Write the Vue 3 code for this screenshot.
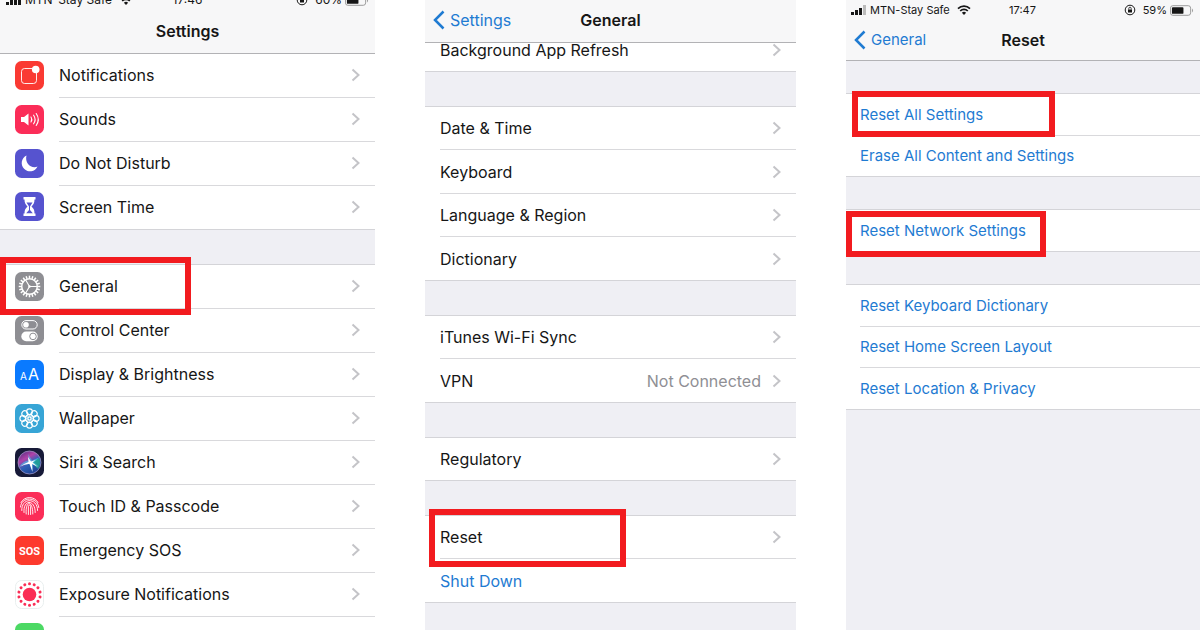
<script setup>
const settingsGroups = [
  [
    { label: 'Notifications', icon: 'notifications', color: '#fa3a33' },
    { label: 'Sounds', icon: 'sounds', color: '#fb2d58' },
    { label: 'Do Not Disturb', icon: 'moon', color: '#5653cf' },
    { label: 'Screen Time', icon: 'hourglass', color: '#5653cf' },
  ],
  [
    { label: 'General', icon: 'gear', color: '#8e8e93', marked: 'general' },
    { label: 'Control Center', icon: 'toggles', color: '#8e8e93' },
    { label: 'Display & Brightness', icon: 'display', color: '#0a7aff' },
    { label: 'Wallpaper', icon: 'flower', color: '#37a5d6' },
    { label: 'Siri & Search', icon: 'siri', color: '#171a38' },
    { label: 'Touch ID & Passcode', icon: 'touch', color: '#fb2d58' },
    { label: 'Emergency SOS', icon: 'sos', color: '#fd3a2d' },
    { label: 'Exposure Notifications', icon: 'exposure', color: '#ffffff' },
    { label: '', icon: 'battery', color: '#4cd964' },
  ],
]

const generalGroups = [
  [{ label: 'Background App Refresh' }],
  [
    { label: 'Date & Time' },
    { label: 'Keyboard' },
    { label: 'Language & Region' },
    { label: 'Dictionary' },
  ],
  [{ label: 'iTunes Wi-Fi Sync' }, { label: 'VPN', value: 'Not Connected' }],
  [{ label: 'Regulatory' }],
  [{ label: 'Reset', marked: 'reset' }, { label: 'Shut Down', action: true }],
]

const resetGroups = [
  [{ label: 'Reset All Settings', marked: 'all' }, { label: 'Erase All Content and Settings' }],
  [{ label: 'Reset Network Settings', marked: 'network' }],
  [
    { label: 'Reset Keyboard Dictionary' },
    { label: 'Reset Home Screen Layout' },
    { label: 'Reset Location & Privacy' },
  ],
]

const spin = (count) => Array.from({ length: count }, (_, i) => (i * 360) / count)
</script>

<template>
  <main class="board">
    <section class="phone settings">
      <div class="status">
        <div class="carrier">
          <svg class="signal" viewBox="0 0 16 10"><path d="M0 7h3v3H0zM4 5h3v5H4zM8 3h3v7H8zM12 0h3v10h-3z" /></svg>
          <span>MTN-Stay Safe</span>
          <svg class="wifi" viewBox="0 0 14 10"><path d="M1 3.6a8.6 8.6 0 0 1 12 0M3.2 6a5.4 5.4 0 0 1 7.6 0" fill="none" stroke="currentColor" stroke-width="1.7" /><path d="M4.9 7.7a3 3 0 0 1 4.2 0L7 10z" /></svg>
        </div>
        <time>17:46</time>
        <div class="power">
          <svg class="lock" viewBox="0 0 12 12"><circle cx="6" cy="6" r="4.8" fill="none" stroke="currentColor" /><path d="M4 5.5h4v3H4z" /><path d="M4.8 5.5V4.4a1.2 1.2 0 0 1 2.4 0v1.1" fill="none" stroke="currentColor" stroke-width=".8" /></svg>
          <span>60%</span>
          <svg class="cell" viewBox="0 0 25 11"><rect x=".5" y=".5" width="21" height="10" rx="2.5" fill="none" stroke="#999" /><rect x="2" y="2" width="12" height="7" rx="1" /><path d="M23 3.5q2 2 0 4z" fill="#999" /></svg>
        </div>
      </div>
      <header class="nav"><h1>Settings</h1></header>
      <ul v-for="(group, g) in settingsGroups" :key="g" class="group">
        <li v-for="item in group" :key="item.icon">
          <a href="#" class="row">
            <svg class="icon" viewBox="0 0 29 29" aria-hidden="true">
              <rect width="29" height="29" rx="6.5" :fill="item.color" />
              <g v-if="item.icon === 'notifications'">
                <path d="M17 7.5H9.5a3 3 0 0 0-3 3v9a3 3 0 0 0 3 3h9a3 3 0 0 0 3-3V12" fill="none" stroke="#fff" stroke-width=".9" />
                <circle cx="20.7" cy="8.5" r="3.8" fill="#fff" />
              </g>
              <g v-else-if="item.icon === 'sounds'" fill="none" stroke="#fff" stroke-width="1.1" stroke-linecap="round">
                <path d="M6 12h3l4.5-3.500v12L9 17H6z" fill="#fff" stroke="none" />
                <path d="M16 12a4.5 4.5 0 0 1 0 5M18.600 10.200a7.500 7.500 0 0 1 0 8.600M21.200 8.500a10.500 10.500 0 0 1 0 12" />
              </g>
              <path v-else-if="item.icon === 'moon'" d="M11.500 6.500A8.300 8.300 0 1 0 22.500 17.600C16 20 9.500 14 11.500 6.500z" fill="#fff" />
              <g v-else-if="item.icon === 'hourglass'">
                <path d="M8.500 5h12v2.600h-1c0 3.500-1 5-3 6.900 2 1.900 3 3.400 3 6.900h1V24h-12v-2.600h1c0-3.500 1-5 3-6.900-2-1.900-3-3.400-3-6.900h-1z" fill="#fff" />
                <path d="M11.500 10.500h6l-2.500 4v3.500l2.800 3.200h-6.600L14 18v-3.500z" fill="#5653cf" />
              </g>
              <g v-else-if="item.icon === 'gear'" fill="none" stroke="#fff">
                <circle cx="14.5" cy="14.5" r="7.800" stroke-width="1.500" />
                <path v-for="a in spin(20)" :key="a" d="M14.500 6.500V3.700" stroke-width="1.500" :transform="`rotate(${a} 14.5 14.5)`" />
                <path d="M14.500 14.500h7.500M14.500 14.500l-3.800-6.600M14.500 14.500l-3.800 6.600" stroke-width="1.100" />
                <circle cx="14.5" cy="14.5" r="1.200" fill="#fff" stroke="none" />
              </g>
              <g v-else-if="item.icon === 'toggles'">
                <rect x="6.800" y="4.600" width="15.400" height="8.400" rx="4.200" fill="none" stroke="#fff" />
                <circle cx="11" cy="8.800" r="2.800" fill="#fff" />
                <rect x="6.300" y="15.600" width="16.400" height="9.600" rx="4.800" fill="#fff" />
                <circle cx="18" cy="20.400" r="3.300" fill="none" stroke="#8e8e93" stroke-width="1" />
              </g>
              <g v-else-if="item.icon === 'display'" fill="#fff" class="glyphs">
                <text x="5" y="20" font-size="10">A</text>
                <text x="13" y="20" font-size="16">A</text>
              </g>
              <g v-else-if="item.icon === 'flower'" fill="none" stroke="#fff">
                <circle v-for="a in spin(8)" :key="a" cx="14.5" cy="7.800" r="2.900" stroke-width="1.100" :transform="`rotate(${a} 14.5 14.5)`" />
                <circle v-for="a in spin(8)" :key="'p' + a" cx="14.5" cy="11.600" r="1.700" stroke-width=".7" :transform="`rotate(${a + 22.5} 14.5 14.5)`" />
              </g>
              <g v-else-if="item.icon === 'siri'">
                <defs>
                  <linearGradient id="siri-glow" x1=".2" y1="0" x2=".8" y2="1">
                    <stop offset="0" stop-color="#5a2f86" /><stop offset=".3" stop-color="#b143a8" />
                    <stop offset=".55" stop-color="#2e62b8" /><stop offset="1" stop-color="#1d3c8c" />
                  </linearGradient>
                </defs>
                <circle cx="14.5" cy="14.5" r="11.500" fill="url(#siri-glow)" stroke="#a79ccc" stroke-width=".7" />
                <path d="M16 14l8-4q2.500 6-1 11z" fill="#1fae93" opacity=".8" />
                <path d="M4 19q5-7 10-6.500L13 6l4 6.500 7-3-5 5 5 4-6-2.500-.5 7-2.500-7q-5-.5-11 3z" fill="#55c4ee" opacity=".6" />
                <path d="M5 18.700q5-3.700 8.500-4.700L13 9l3 4.500 4.500-1.500-3 2.500 5.500 4.500-6-3 .500 8-3-8q-4-.5-9.500 2.700z" fill="#fff" />
              </g>
              <g v-else-if="item.icon === 'touch'" fill="none" stroke="#fff" stroke-width=".9" stroke-linecap="round">
                <path d="M6 10.500C9.500 3.800 19.500 3.800 23 10.500M5.500 15C6 4.500 22.500 4 23.800 15.500M6.800 18.500c-.8-13 15.800-13.500 15.800 0M9 20.500c-1.200-13.500 11.400-13.500 11.200 0M11.200 22c-1.200-14 6.800-14 6.600 0M13.400 22.500v-8c0-1.800 2.200-1.800 2.200 0v8" />
              </g>
              <text v-else-if="item.icon === 'sos'" class="sos" x="14.5" y="18.500" text-anchor="middle" font-size="11" fill="#fff">SOS</text>
              <g v-else-if="item.icon === 'exposure'" fill="#fa2d55">
                <rect x=".5" y=".5" width="28" height="28" rx="6" fill="none" stroke="#e9eeee" />
                <circle cx="14.5" cy="14.5" r="6.800" />
                <circle v-for="a in spin(14)" :key="a" cx="14.5" cy="3.700" r="1.500" :transform="`rotate(${a} 14.5 14.5)`" />
              </g>
            </svg>
            <span class="body">
              <span class="label">{{ item.label }}</span>
              <svg class="chevron" viewBox="0 0 9 14"><path d="M1.500 1.500 7.500 7l-6 5.500" /></svg>
            </span>
          </a>
          <i v-if="item.marked" class="mark" :class="item.marked"></i>
        </li>
      </ul>
    </section>

    <section class="phone general">
      <header class="nav">
        <a href="#" class="back"><svg viewBox="0 0 12 20"><path d="M10.500 1.500 2 10l8.500 8.500" /></svg>Settings</a>
        <h1>General</h1>
      </header>
      <ul v-for="(group, g) in generalGroups" :key="g" class="group">
        <li v-for="item in group" :key="item.label">
          <button v-if="item.action" type="button" class="row action">
            <span class="body"><span class="label">{{ item.label }}</span></span>
          </button>
          <a v-else href="#" class="row">
            <span class="body">
              <span class="label">{{ item.label }}</span>
              <span v-if="item.value" class="value">{{ item.value }}</span>
              <svg class="chevron" viewBox="0 0 9 14"><path d="M1.500 1.500 7.500 7l-6 5.500" /></svg>
            </span>
          </a>
          <i v-if="item.marked" class="mark" :class="item.marked"></i>
        </li>
      </ul>
    </section>

    <section class="phone reset-page">
      <div class="status">
        <div class="carrier">
          <svg class="signal" viewBox="0 0 16 10"><path d="M0 7h3v3H0zM4 5h3v5H4zM8 3h3v7H8z" /><path d="M12 0h3v10h-3z" fill="#bbb" /></svg>
          <span>MTN-Stay Safe</span>
          <svg class="wifi" viewBox="0 0 14 10"><path d="M1 3.600a8.600 8.600 0 0 1 12 0M3.200 6a5.400 5.400 0 0 1 7.600 0" fill="none" stroke="currentColor" stroke-width="1.700" /><path d="M4.900 7.700a3 3 0 0 1 4.200 0L7 10z" /></svg>
        </div>
        <time>17:47</time>
        <div class="power">
          <svg class="lock" viewBox="0 0 12 12"><circle cx="6" cy="6" r="4.800" fill="none" stroke="currentColor" /><path d="M4 5.500h4v3H4z" /><path d="M4.800 5.500V4.400a1.200 1.200 0 0 1 2.400 0v1.100" fill="none" stroke="currentColor" stroke-width=".8" /></svg>
          <span>59%</span>
          <svg class="cell" viewBox="0 0 25 11"><rect x=".5" y=".5" width="21" height="10" rx="2.500" fill="none" stroke="#999" /><rect x="2" y="2" width="12" height="7" rx="1" /><path d="M23 3.500q2 2 0 4z" fill="#999" /></svg>
        </div>
      </div>
      <header class="nav">
        <a href="#" class="back"><svg viewBox="0 0 12 20"><path d="M10.500 1.500 2 10l8.500 8.500" /></svg>General</a>
        <h1>Reset</h1>
      </header>
      <ul v-for="(group, g) in resetGroups" :key="g" class="group">
        <li v-for="item in group" :key="item.label">
          <button type="button" class="row action">
            <span class="body"><span class="label">{{ item.label }}</span></span>
          </button>
          <i v-if="item.marked" class="mark" :class="item.marked"></i>
        </li>
      </ul>
    </section>
  </main>
</template>

<style>
body {
  background: #fff;
}
</style>

<style scoped>
.board {
  display: grid;
  grid-template-columns: 375fr 371fr 354fr;
  column-gap: 50px;
  height: 100vh;
  overflow: hidden;
  font-family: Inter, "Liberation Sans", sans-serif;
  font-size: 16px;
  color: #161616;
}
.phone {
  min-width: 0;
  height: 100vh;
  background: #efeff4;
}
.status {
  display: grid;
  grid-template-columns: 1fr auto 1fr;
  align-items: center;
  height: 20px;
  padding: 0 6px;
  background: #f7f7f8;
  font-size: 12px;
  line-height: 20px;
}
.settings .status {
  margin-top: -10px;
}
.status svg {
  fill: currentColor;
}
.carrier,
.power {
  display: flex;
  align-items: center;
  gap: 3px;
}
.power {
  justify-content: flex-end;
}
.signal {
  width: 16px;
  height: 10px;
}
.wifi {
  width: 14px;
  height: 10px;
  margin-left: 4px;
}
.lock {
  width: 12px;
  height: 12px;
  margin-right: 4px;
}
.cell {
  width: 24px;
  height: 11px;
}
.nav {
  position: relative;
  display: grid;
  grid-template-columns: 1fr auto 1fr;
  align-items: center;
  box-sizing: border-box;
  height: 44px;
  border-bottom: 1px solid #b2b2b5;
  background: #f7f7f8;
  z-index: 1;
}
h1 {
  grid-column: 2;
  margin: 0;
  font-size: 16px;
  line-height: 20px;
  font-weight: 600;
}
.back {
  display: flex;
  align-items: center;
  gap: 5px;
  padding-left: 8px;
  color: #1f7bd2;
  text-decoration: none;
  line-height: 20px;
}
.back svg {
  width: 12px;
  height: 20px;
  fill: none;
  stroke: currentColor;
  stroke-width: 2.5;
}
.group {
  margin: 0;
  padding: 0;
  list-style: none;
  border-top: 1px solid #d4d4d8;
  background: #fff;
}
.group + .group {
  margin-top: 34px;
}
li {
  position: relative;
  height: 44px;
}
.row {
  display: flex;
  align-items: center;
  gap: 15px;
  box-sizing: border-box;
  width: 100%;
  height: 100%;
  margin: 0;
  padding: 0 0 0 15px;
  border: 0;
  background: none;
  color: inherit;
  font: inherit;
  text-align: left;
  text-decoration: none;
  cursor: pointer;
}
.icon {
  flex: none;
  width: 29px;
  height: 29px;
  margin-bottom: 2px;
}
.body {
  flex: 1;
  display: flex;
  align-items: center;
  gap: 11px;
  align-self: stretch;
  padding-right: 15px;
  border-bottom: 1px solid #d9d9dc;
}
li:last-child .row {
  border-bottom: 1px solid #d4d4d8;
}
li:last-child .body {
  border-bottom: 0;
}
.label {
  flex: 1;
  line-height: 20px;
  white-space: nowrap;
}
.value {
  color: #8f8f94;
}
.chevron {
  width: 9px;
  height: 14px;
  fill: none;
  stroke: #c4c4c8;
  stroke-width: 2;
}
.action {
  color: #1f7bd2;
}
.settings .nav + .group {
  border-top: 0;
}
.settings .nav,
.general .nav,
.settings .body {
  padding-bottom: 2px;
}
.glyphs {
  font-family: Inter, sans-serif;
  font-weight: 400;
}
.sos {
  font-family: Roboto, sans-serif;
  font-weight: 700;
}
.general .nav {
  height: 43px;
}
.general li {
  height: 43px;
}
.general li:nth-child(even) {
  height: 44px;
}
.general .nav + .group {
  margin-top: -15px;
}
.reset-page .status {
  padding-left: 5px;
  font-size: 11px;
}
.reset-page .nav {
  height: 41px;
}
.reset-page .nav + .group,
.reset-page .group + .group {
  margin-top: 32px;
}
.reset-page li {
  height: 42px;
}
.reset-page li:nth-child(even) {
  height: 41px;
}
.reset-page,
.reset-page .back {
  font-size: 15px;
}
.reset-page .row {
  padding-left: 14px;
}
.mark {
  position: absolute;
  box-sizing: border-box;
  border: 6px solid #f21b1f;
  pointer-events: none;
  z-index: 2;
}
.mark.general {
  left: 0;
  top: -8px;
  width: 191px;
  height: 58px;
}
.mark.reset {
  left: 4px;
  top: -7px;
  width: 197px;
  height: 58px;
}
.mark.all {
  left: 6px;
  top: -3px;
  width: 203px;
  height: 46px;
}
.mark.network {
  left: 0;
  top: 1px;
  width: 200px;
  height: 46px;
}
</style>
